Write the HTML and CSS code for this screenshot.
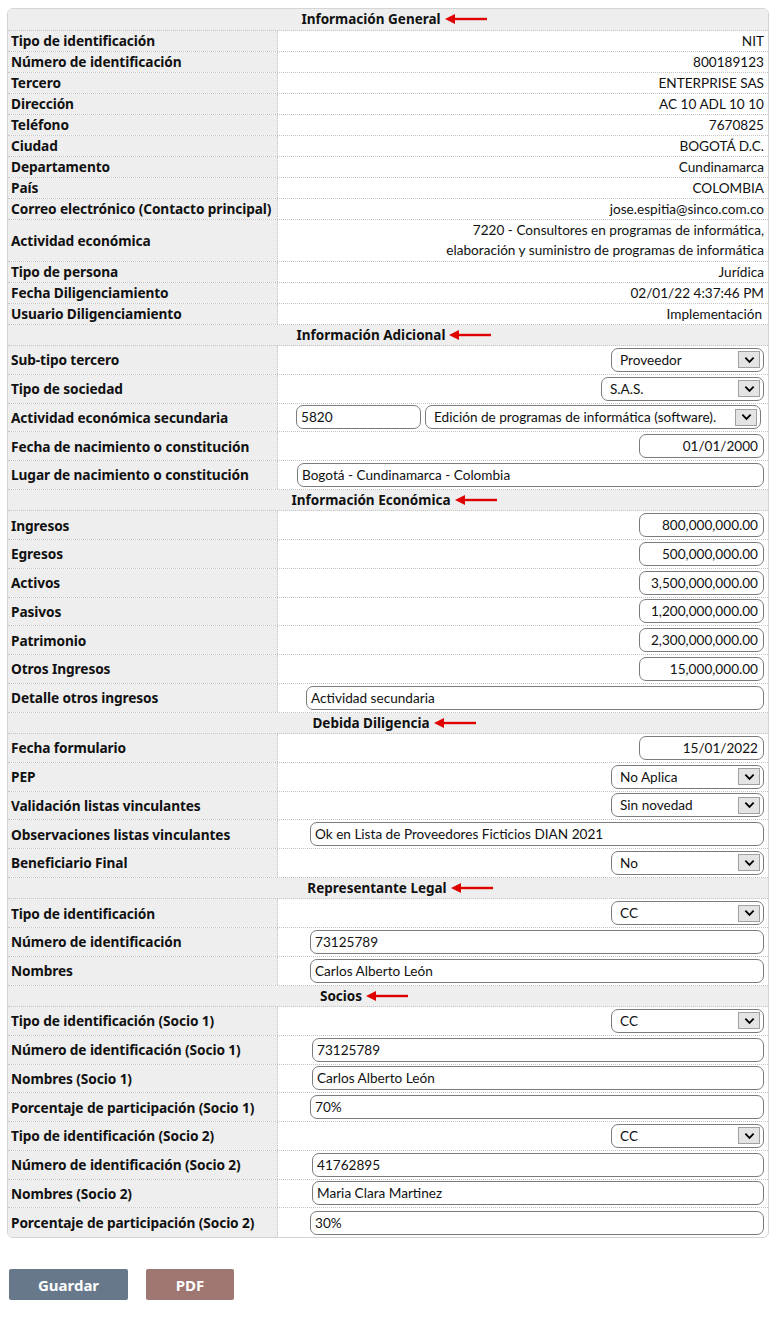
FILE: index.html
```html
<!DOCTYPE html>
<html lang="es">
<head>
<meta charset="utf-8">
<title>Formulario</title>
<link rel="stylesheet" href="styles.css">
</head>
<body>
<div class="page">
  <div class="sheet">
    <div class="head"><span>Información General</span><svg class="arrow" viewBox="0 0 42 10" width="42" height="10"><polygon points="0,5 10,0 10,10" fill="#e00000"/><rect x="8" y="3.8" width="34" height="2.4" fill="#e00000"/></svg></div>
    <div class="row"><div class="lab">Tipo de identificación</div><div class="val">NIT</div></div>
    <div class="row"><div class="lab">Número de identificación</div><div class="val">800189123</div></div>
    <div class="row"><div class="lab">Tercero</div><div class="val">ENTERPRISE SAS</div></div>
    <div class="row"><div class="lab">Dirección</div><div class="val">AC 10 ADL 10 10</div></div>
    <div class="row"><div class="lab">Teléfono</div><div class="val">7670825</div></div>
    <div class="row"><div class="lab">Ciudad</div><div class="val">BOGOTÁ D.C.</div></div>
    <div class="row"><div class="lab">Departamento</div><div class="val">Cundinamarca</div></div>
    <div class="row"><div class="lab">País</div><div class="val">COLOMBIA</div></div>
    <div class="row"><div class="lab">Correo electrónico (Contacto principal)</div><div class="val">jose.espitia@sinco.com.co</div></div>
    <div class="row"><div class="lab">Actividad económica</div><div class="val val2">7220 - Consultores en programas de informática,<br>elaboración y suministro de programas de informática</div></div>
    <div class="row"><div class="lab">Tipo de persona</div><div class="val">Jurídica</div></div>
    <div class="row"><div class="lab">Fecha Diligenciamiento</div><div class="val">02/01/22 4:37:46 PM</div></div>
    <div class="row"><div class="lab">Usuario Diligenciamiento</div><div class="val pad-end">Implementación</div></div>

    <div class="head"><span>Información Adicional</span><svg class="arrow" viewBox="0 0 42 10" width="42" height="10"><polygon points="0,5 10,0 10,10" fill="#e00000"/><rect x="8" y="3.8" width="34" height="2.4" fill="#e00000"/></svg></div>
    <div class="row frow"><div class="lab">Sub-tipo tercero</div><div class="ctl"><div class="sel w153"><span>Proveedor</span><i class="btn"><svg viewBox="0 0 12 8" width="11" height="8"><path d="M1.5 1.5 L6 6 L10.5 1.5" fill="none" stroke="#000" stroke-width="2"/></svg></i></div></div></div>
    <div class="row frow"><div class="lab">Tipo de sociedad</div><div class="ctl"><div class="sel w163"><span>S.A.S.</span><i class="btn"><svg viewBox="0 0 12 8" width="11" height="8"><path d="M1.5 1.5 L6 6 L10.5 1.5" fill="none" stroke="#000" stroke-width="2"/></svg></i></div></div></div>
    <div class="row frow"><div class="lab">Actividad económica secundaria</div><div class="ctl ctl-split"><div class="inp w125">5820</div><div class="sel sel-wide"><span>Edición de programas de informática (software).</span><i class="btn"><svg viewBox="0 0 12 8" width="11" height="8"><path d="M1.5 1.5 L6 6 L10.5 1.5" fill="none" stroke="#000" stroke-width="2"/></svg></i></div></div></div>
    <div class="row frow"><div class="lab">Fecha de nacimiento o constitución</div><div class="ctl"><div class="inp num w125">01/01/2000</div></div></div>
    <div class="row frow"><div class="lab">Lugar de nacimiento o constitución</div><div class="ctl"><div class="inp w467">Bogotá - Cundinamarca - Colombia</div></div></div>

    <div class="head"><span>Información Económica</span><svg class="arrow" viewBox="0 0 42 10" width="42" height="10"><polygon points="0,5 10,0 10,10" fill="#e00000"/><rect x="8" y="3.8" width="34" height="2.4" fill="#e00000"/></svg></div>
    <div class="row frow"><div class="lab">Ingresos</div><div class="ctl"><div class="inp num w125">800,000,000.00</div></div></div>
    <div class="row frow"><div class="lab">Egresos</div><div class="ctl"><div class="inp num w125">500,000,000.00</div></div></div>
    <div class="row frow"><div class="lab">Activos</div><div class="ctl"><div class="inp num w125">3,500,000,000.00</div></div></div>
    <div class="row frow"><div class="lab">Pasivos</div><div class="ctl"><div class="inp num w125">1,200,000,000.00</div></div></div>
    <div class="row frow"><div class="lab">Patrimonio</div><div class="ctl"><div class="inp num w125">2,300,000,000.00</div></div></div>
    <div class="row frow"><div class="lab">Otros Ingresos</div><div class="ctl"><div class="inp num w125">15,000,000.00</div></div></div>
    <div class="row frow"><div class="lab">Detalle otros ingresos</div><div class="ctl"><div class="inp w458">Actividad secundaria</div></div></div>

    <div class="head"><span>Debida Diligencia</span><svg class="arrow" viewBox="0 0 42 10" width="42" height="10"><polygon points="0,5 10,0 10,10" fill="#e00000"/><rect x="8" y="3.8" width="34" height="2.4" fill="#e00000"/></svg></div>
    <div class="row frow"><div class="lab">Fecha formulario</div><div class="ctl"><div class="inp num w125">15/01/2022</div></div></div>
    <div class="row frow"><div class="lab">PEP</div><div class="ctl"><div class="sel w153"><span>No Aplica</span><i class="btn"><svg viewBox="0 0 12 8" width="11" height="8"><path d="M1.5 1.5 L6 6 L10.5 1.5" fill="none" stroke="#000" stroke-width="2"/></svg></i></div></div></div>
    <div class="row frow"><div class="lab">Validación listas vinculantes</div><div class="ctl"><div class="sel w153"><span>Sin novedad</span><i class="btn"><svg viewBox="0 0 12 8" width="11" height="8"><path d="M1.5 1.5 L6 6 L10.5 1.5" fill="none" stroke="#000" stroke-width="2"/></svg></i></div></div></div>
    <div class="row frow"><div class="lab">Observaciones listas vinculantes</div><div class="ctl"><div class="inp w454">Ok en Lista de Proveedores Ficticios DIAN 2021</div></div></div>
    <div class="row frow"><div class="lab">Beneficiario Final</div><div class="ctl"><div class="sel w153"><span>No</span><i class="btn"><svg viewBox="0 0 12 8" width="11" height="8"><path d="M1.5 1.5 L6 6 L10.5 1.5" fill="none" stroke="#000" stroke-width="2"/></svg></i></div></div></div>

    <div class="head head-rep"><span>Representante Legal</span><svg class="arrow" viewBox="0 0 42 10" width="42" height="10"><polygon points="0,5 10,0 10,10" fill="#e00000"/><rect x="8" y="3.8" width="34" height="2.4" fill="#e00000"/></svg></div>
    <div class="row frow"><div class="lab">Tipo de identificación</div><div class="ctl"><div class="sel w153"><span>CC</span><i class="btn"><svg viewBox="0 0 12 8" width="11" height="8"><path d="M1.5 1.5 L6 6 L10.5 1.5" fill="none" stroke="#000" stroke-width="2"/></svg></i></div></div></div>
    <div class="row frow"><div class="lab">Número de identificación</div><div class="ctl"><div class="inp w454">73125789</div></div></div>
    <div class="row frow"><div class="lab">Nombres</div><div class="ctl"><div class="inp w454">Carlos Alberto León</div></div></div>

    <div class="head head-socios"><span>Socios</span><svg class="arrow" viewBox="0 0 42 10" width="42" height="10"><polygon points="0,5 10,0 10,10" fill="#e00000"/><rect x="8" y="3.8" width="34" height="2.4" fill="#e00000"/></svg></div>
    <div class="row frow"><div class="lab">Tipo de identificación (Socio 1)</div><div class="ctl"><div class="sel w153"><span>CC</span><i class="btn"><svg viewBox="0 0 12 8" width="11" height="8"><path d="M1.5 1.5 L6 6 L10.5 1.5" fill="none" stroke="#000" stroke-width="2"/></svg></i></div></div></div>
    <div class="row frow"><div class="lab">Número de identificación (Socio 1)</div><div class="ctl"><div class="inp w452">73125789</div></div></div>
    <div class="row frow"><div class="lab">Nombres (Socio 1)</div><div class="ctl"><div class="inp w452">Carlos Alberto León</div></div></div>
    <div class="row frow"><div class="lab">Porcentaje de participación (Socio 1)</div><div class="ctl"><div class="inp w454">70%</div></div></div>
    <div class="row frow"><div class="lab">Tipo de identificación (Socio 2)</div><div class="ctl"><div class="sel w153"><span>CC</span><i class="btn"><svg viewBox="0 0 12 8" width="11" height="8"><path d="M1.5 1.5 L6 6 L10.5 1.5" fill="none" stroke="#000" stroke-width="2"/></svg></i></div></div></div>
    <div class="row frow"><div class="lab">Número de identificación (Socio 2)</div><div class="ctl"><div class="inp w452">41762895</div></div></div>
    <div class="row frow"><div class="lab">Nombres (Socio 2)</div><div class="ctl"><div class="inp w452">Maria Clara Martinez</div></div></div>
    <div class="row frow last"><div class="lab">Porcentaje de participación (Socio 2)</div><div class="ctl"><div class="inp w454">30%</div></div></div>
  </div>

  <div class="actions">
    <button class="button save">Guardar</button>
    <button class="button pdf">PDF</button>
  </div>
</div>
</body>
</html>
```
FILE: styles.css
```css
* { box-sizing: border-box; }
html, body { margin: 0; padding: 0; background: #fff; }
body { font-family: "Lato", "Open Sans", sans-serif; color: #111; }

.page { padding: 8px 9px 0 7px; }

.sheet {
  border: 1px solid #d4d4d4;
  border-radius: 6px;
  overflow: hidden;
  background: #fff;
}

.head {
  background: #eeeeee;
  height: 21.5px;
  display: flex;
  align-items: center;
  justify-content: center;
  padding-left: 12px;
  font-family: "Noto Sans", "DejaVu Sans", sans-serif;
  font-weight: 700;
  font-size: 13.5px;
  color: #111;
  border-bottom: 1px dotted #c4c4c4;
}
.head-rep { padding-left: 24px; }
.head-socios { padding-left: 0; padding-right: 48px; }
.arrow { margin-left: 4px; flex: none; }

.row {
  display: grid;
  grid-template-columns: 270px 1fr;
  min-height: 21px;
  border-bottom: 1px dotted #c4c4c4;
}
.row.last { border-bottom: none; }

.lab {
  background: #eeeeee;
  border-right: 1px dotted #c4c4c4;
  padding: 0 3px;
  display: flex;
  align-items: center;
  font-family: "Noto Sans", "DejaVu Sans", sans-serif;
  font-weight: 700;
  font-size: 13.7px;
  letter-spacing: -0.1px;
  color: #111;
  white-space: nowrap;
}

.val {
  text-align: right;
  padding: 0 4px;
  font-size: 13.6px;
  line-height: 20px;
  display: flex;
  flex-direction: column;
  justify-content: center;
  align-items: flex-end;
}
.val.val2 { line-height: 20.5px; }
.val.pad-end { padding-right: 6px; }

.frow { height: 28.75px; }

.ctl {
  display: flex;
  justify-content: flex-end;
  align-items: center;
  padding: 0 4px;
  gap: 4px;
}
.ctl-split { padding-right: 7px; justify-content: flex-start; padding-left: 18px; }

.inp, .sel {
  height: 24px;
  border: 1px solid #7b7b7b;
  border-radius: 7px;
  background: #fff;
  font-size: 13.6px;
  display: flex;
  align-items: center;
  white-space: nowrap;
  overflow: hidden;
}
.inp { padding: 0 4px; }
.inp.num { justify-content: flex-end; padding-right: 5px; }
.sel { padding: 0 3px 0 8px; justify-content: space-between; }
.sel-wide { flex: 1; padding-left: 8px; }

.btn {
  width: 22px;
  height: 17px;
  background: #e4e4e4;
  border: 1px solid #a0a0a0;
  display: flex;
  align-items: center;
  justify-content: center;
  flex: none;
  margin-left: 4px;
}

.w125 { width: 125px; }
.w153 { width: 153px; }
.w163 { width: 163px; }
.w467 { width: 467px; }
.w458 { width: 458px; }
.w454 { width: 454px; }
.w452 { width: 452px; }

.actions {
  display: flex;
  gap: 18px;
  padding: 31px 0 0 2px;
}
.button {
  border: none;
  border-radius: 2px;
  height: 31px;
  color: #fff;
  font-family: "Noto Sans", "DejaVu Sans", sans-serif;
  font-weight: 700;
  font-size: 15px;
  padding: 0;
}
.save { width: 119px; background: #66788a; }
.pdf { width: 88px; background: #9e7672; }
```
